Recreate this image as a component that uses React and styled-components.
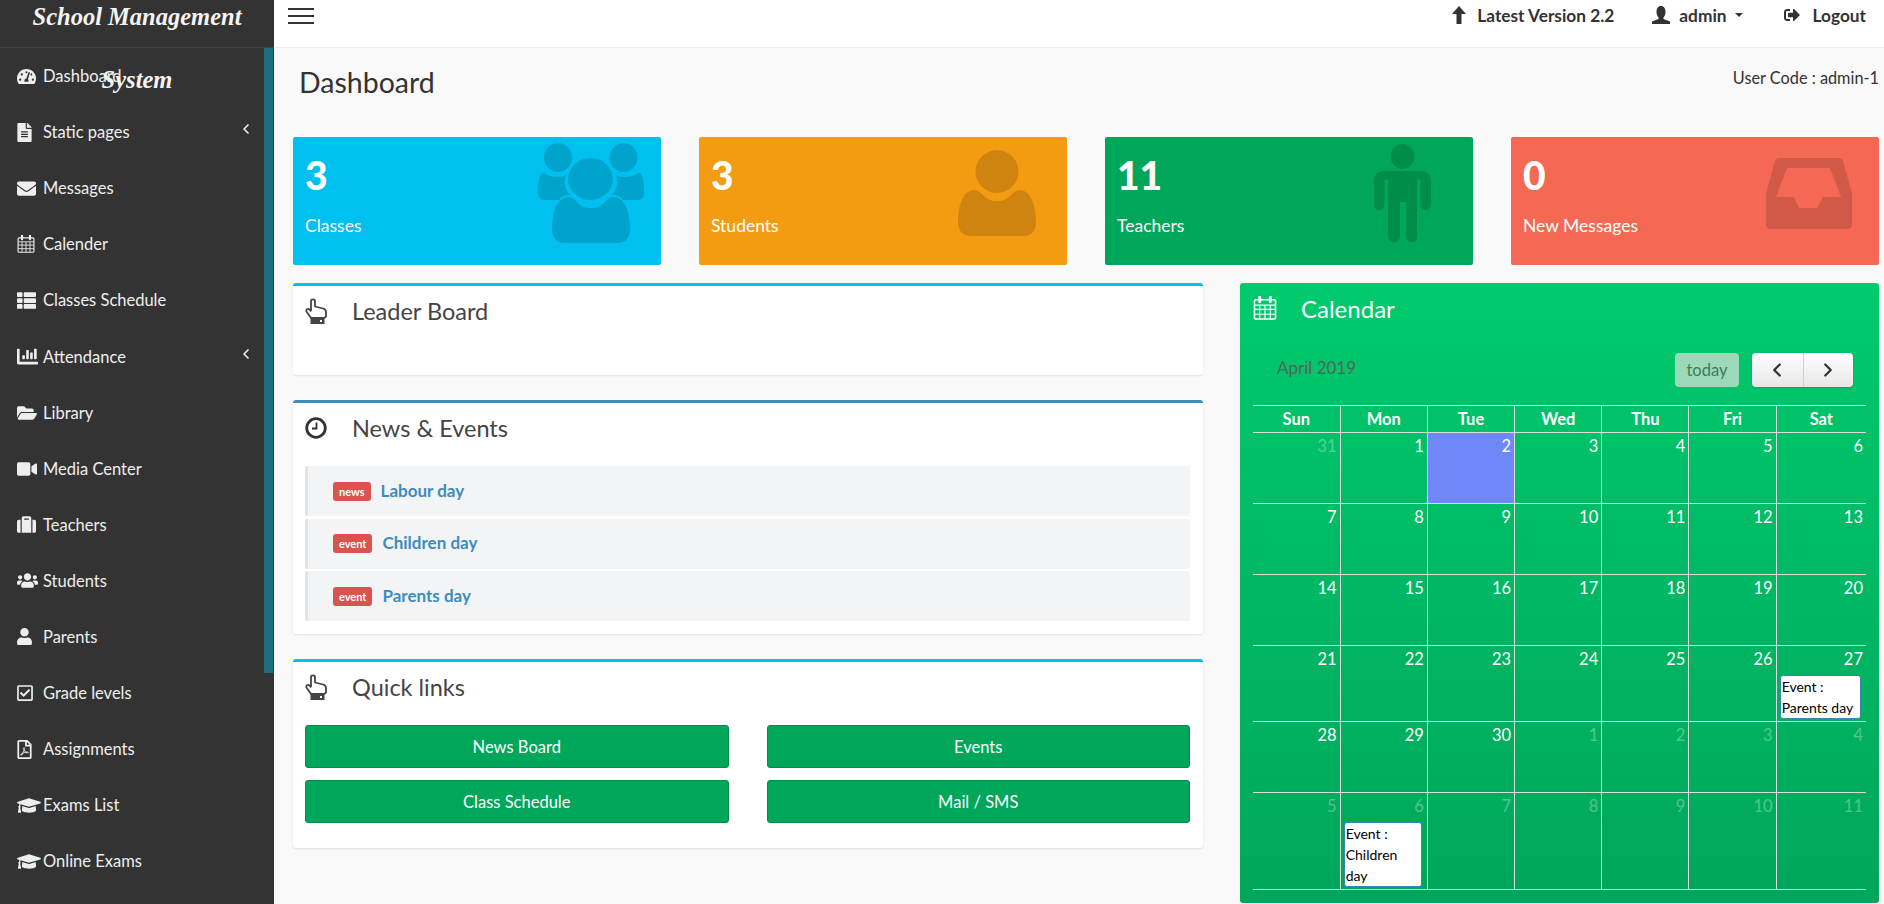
import React from "react"
import styled, { createGlobalStyle } from "styled-components"
import {
  FaTachometerAlt, FaFileAlt, FaEnvelope, FaThList, FaChartBar, FaFolderOpen, FaVideo,
  FaSuitcase, FaUsers, FaUser, FaRegCheckSquare, FaRegFilePdf, FaGraduationCap, FaSignOutAlt,
} from "react-icons/fa"
import { ChevronLeft, ChevronRight } from "lucide-react"

const GlobalStyle = createGlobalStyle`
  html, body { margin: 0; padding: 0; height: 100%; overflow: hidden; }
  body { font-family: "Lato", "Noto Sans", sans-serif; font-size: 16px; color: #333; }
  * { box-sizing: border-box; }
`

const Shell = styled.div`
  display: flex;
  height: 100vh;
  overflow: hidden;
`

const Sidebar = styled.aside`
  position: relative;
  flex: 0 0 274px;
  background: #333;
  color: #eee;
`

const Logo = styled.div`
  display: flow-root;
  position: relative;
  z-index: 2;
  height: 48px;
  border-bottom: 1px solid #444;
  text-align: center;
  font-family: "Liberation Serif", serif;
  font-style: italic;
  font-weight: 700;
  font-size: 24.5px;
  line-height: 63px;
  color: #f4f4f4;
  span { display: block; }
  span:first-child { margin-top: -15px; }
`

const ScrollThumb = styled.div`
  position: absolute;
  top: 48px;
  right: 1px;
  width: 9px;
  height: 625px;
  background: #1f6e80;
`

const Menu = styled.nav`
  display: flex;
  flex-direction: column;
`

const MenuItem = styled.div`
  flex: 0 0 56.1px;
  display: flex;
  align-items: center;
  padding: 0 20px 0 17px;
  font-size: 16.5px;
  color: #eee;
`

const MenuIcon = styled.span`
  flex: 0 0 26px;
  display: flex;
  align-items: center;
  svg { width: ${p => p.$w}px; height: ${p => p.$h}px; flex: none; display: block; }
`

const MenuCaret = styled.span`
  margin-left: auto;
  margin-top: -6px;
  display: flex;
`

const Right = styled.div`
  flex: 1;
  min-width: 0;
  display: flex;
  flex-direction: column;
  background: #f9f9f9;
`

const TopBar = styled.header`
  flex: 0 0 48px;
  display: flex;
  align-items: flex-start;
  padding: 7px 18px 0 14px;
  background: #fff;
  border-bottom: 1px solid #eee;
  font-weight: 700;
  font-size: 17.3px;
  color: #333;
`

const Burger = styled.div`
  width: 26px;
  margin-top: 1px;
  display: flex;
  flex-direction: column;
  gap: 5px;
  i { display: block; height: 2px; background: #333; }
`

const TopLinks = styled.div`
  margin-left: auto;
  display: flex;
  align-items: center;
  height: 16px;
`

const TopLink = styled.span`
  display: flex;
  align-items: center;
  gap: ${p => p.$gap}px;
  margin-left: ${p => p.$ml}px;
  svg { display: block; }
`

const Caret = styled.i`
  width: 0;
  height: 0;
  margin-left: -1px;
  border-left: 4px solid transparent;
  border-right: 4px solid transparent;
  border-top: 4px solid #333;
`

const Content = styled.main`
  flex: 1;
  padding: 0 5px 0 19px;
`

const PageHead = styled.div`
  height: 89px;
  display: flex;
  justify-content: space-between;
  align-items: flex-start;
`

const PageTitle = styled.h1`
  margin: 15px 0 0 6px;
  font-size: 28.5px;
  line-height: 38px;
  font-weight: 400;
  color: #333;
`

const UserCode = styled.div`
  margin-top: 19px;
  font-size: 16.3px;
  line-height: 22px;
`

const Stats = styled.section`
  display: grid;
  grid-template-columns: repeat(4, 1fr);
  gap: 38px;
  margin-bottom: 18px;
`

const StatCard = styled.div`
  height: 128px;
  display: flex;
  justify-content: space-between;
  align-items: center;
  padding-left: 12px;
  background: ${p => p.$bg};
  border-radius: 2px;
  color: #fff;
`

const StatText = styled.div`
  align-self: flex-start;
`

const StatValue = styled.div`
  margin-top: 13px;
  font-size: 39px;
  line-height: 50px;
  font-weight: 900;
`

const StatLabel = styled.div`
  margin-top: 16px;
  font-size: 17.5px;
  line-height: 20px;
`

const StatIcon = styled.svg`
  display: block;
  width: ${p => p.$w}px;
  height: ${p => p.$h}px;
  margin: 0 ${p => p.$mr}px 16px 0;
  fill: rgba(0, 0, 0, 0.15);
`

const Columns = styled.section`
  display: grid;
  grid-template-columns: 910px 639px;
  gap: 37px;
  align-items: start;
`

const LeftCol = styled.div`
  display: flex;
  flex-direction: column;
  gap: 25px;
`

const Panel = styled.div`
  background: #fff;
  border-top: 3px solid ${p => p.$accent};
  border-radius: 3px;
  box-shadow: 0 1px 2px rgba(0, 0, 0, 0.1);
`

const PanelHead = styled.div`
  height: 50px;
  padding-left: 12px;
  display: flex;
  align-items: center;
  font-size: 23.5px;
  color: #444;
`

const PanelIcon = styled.span`
  flex: 0 0 47px;
  display: flex;
  svg { display: block; }
`

const PanelBody = styled.div`
  padding: 13px 13px ${p => p.$pb}px 12px;
`

const NewsList = styled.div`
  display: flex;
  flex-direction: column;
  gap: 2.5px;
`

const NewsItem = styled.div`
  height: 50px;
  display: flex;
  align-items: center;
  padding: 0 0 2px 25px;
  gap: 10px;
  background: #f3f4f5;
  border-left: 3px solid #e1e3e5;
  border-radius: 2px;
  color: #3c8dbc;
  font-weight: 700;
  font-size: 17px;
`

const Tag = styled.span`
  margin-top: 2px;
  padding: 3px 6px;
  background: #d9534f;
  border-radius: 3px;
  color: #fff;
  font-size: 11px;
  line-height: 13px;
  font-weight: 700;
`

const LinkGrid = styled.div`
  display: grid;
  grid-template-columns: 1fr 1fr;
  gap: 12px 38px;
`

const LinkButton = styled.div`
  height: 43px;
  display: flex;
  align-items: center;
  justify-content: center;
  background: #00a65a;
  border: 1px solid #008d4c;
  border-radius: 3px;
  color: #fff;
  font-size: 16.5px;
`

const CalendarBox = styled.div`
  height: 620px;
  padding: 0 13px;
  background: linear-gradient(to top, #00a65a, #00ca6d);
  border-radius: 3px;
  color: #fff;
`

const CalendarHead = styled.div`
  height: 50px;
  display: flex;
  align-items: center;
  font-size: 24px;
  svg { display: block; }
  span { flex: 0 0 48px; }
`

const CalendarBar = styled.div`
  height: 72px;
  padding: 20px 13px 0 24px;
  display: flex;
  align-items: flex-start;
`

const MonthName = styled.div`
  font-size: 17px;
  line-height: 24px;
  margin-top: 3px;
  color: #50655c;
`

const TodayButton = styled.div`
  margin-left: auto;
  width: 64px;
  height: 34px;
  display: flex;
  align-items: center;
  justify-content: center;
  background: #9bd9b9;
  border-radius: 4px;
  color: #3f7a5e;
  font-size: 16.5px;
`

const NavGroup = styled.div`
  margin-left: 13px;
  width: 101px;
  height: 34px;
  display: grid;
  grid-template-columns: 1fr 1fr;
  background: linear-gradient(to bottom, #fff, #e6e6e6);
  border-radius: 4px;
  box-shadow: 0 1px 2px rgba(0, 0, 0, 0.15);
  color: #333;
`

const NavCell = styled.div`
  display: flex;
  align-items: center;
  justify-content: center;
  border-left: ${p => (p.$divided ? "1px solid #d0d0d0" : "none")};
`

const CalTable = styled.table`
  width: 100%;
  table-layout: fixed;
  border-collapse: collapse;
  border-top: 1px solid #ddd;
  border-bottom: 1px solid #ddd;
`

const CalHeadCell = styled.th`
  height: 27px;
  padding: 0;
  border-left: 1px solid #ddd;
  border-bottom: 1px solid #ddd;
  font-size: 16.5px;
  font-weight: 700;
  &:first-child { border-left: none; }
  &:not(:last-child) { width: 87.2px; }
`

const DayCell = styled.td`
  height: 71px;
  padding: 0 0 2px;
  vertical-align: top;
  border-left: 1px solid #ddd;
  border-top: 1px solid #ddd;
  background: ${p => (p.$today ? "#6f87f7" : "transparent")};
  &:first-child { border-left: none; }
`

const DayNumber = styled.div`
  height: 29px;
  padding: 1px 3px 0 0;
  text-align: right;
  font-size: 16.5px;
  line-height: 24px;
  opacity: ${p => (p.$muted ? 0.3 : 1)};
`

const EventBox = styled.div`
  margin: 0 5px 0 3px;
  padding: 0 1px;
  background: #fff;
  border: 1px solid #3a87ad;
  border-radius: 3px;
  color: #000;
  font-size: 14px;
  line-height: 21px;
`

const CalendarGlyph = ({ size, color }) => (
  <svg width={size} height={size} viewBox="0 0 24 25" fill="none" stroke={color} strokeWidth="1.6">
    <rect x="1" y="4" width="22" height="20" rx="1.5" />
    <path d="M1 9.5H23M1 14H23M1 19H23M6.5 9.5V24M12 9.5V24M17.5 9.5V24" strokeWidth="1.2" />
    <path d="M6.5 1V6M17.5 1V6" strokeWidth="3" strokeLinecap="round" />
  </svg>
)

const HandIcon = () => (
  <svg width="22" height="26" viewBox="0 0 22 26" fill="none" stroke="#444" strokeWidth="1.8" strokeLinejoin="round">
    <path d="M6 13V3.2C6 .8 10 .8 10 3.2V8.5L18 10.5C20 11 21 12 21 14V18.5L19 20H6L1.5 13.5C.5 11.5 3 10 4.5 11.5L6 13.5" />
    <rect x="5.5" y="20" width="14" height="6" fill="#444" stroke="none" />
    <rect x="15" y="22" width="2" height="2" fill="#fff" stroke="none" />
  </svg>
)

const ClockIcon = () => (
  <svg width="22" height="22" viewBox="0 0 22 22" fill="none" stroke="#333">
    <circle cx="11" cy="11" r="9.3" strokeWidth="2.8" />
    <path d="M11.5 5.5V11.5H7" strokeWidth="1.8" />
  </svg>
)

const ArrowUpIcon = () => (
  <svg width="14" height="18" viewBox="0 0 14 18" fill="#333">
    <path d="M7 0L14 8H9.5V18H4.5V8H0Z" />
  </svg>
)

const BustIcon = () => (
  <svg width="18" height="18" viewBox="0 0 18 18" fill="#333">
    <path d="M9 0C12 0 13.5 2.5 13.5 6C13.5 8.5 12.5 10.5 11.5 11.5V13L18 15.5V18H0V15.5L6.5 13V11.5C5.5 10.5 4.5 8.5 4.5 6C4.5 2.5 6 0 9 0Z" />
  </svg>
)

const menu = [
  { label: "Dashboard", icon: <FaTachometerAlt />, w: 19, h: 17 },
  { label: "Static pages", icon: <FaFileAlt />, w: 15, h: 19, sub: true },
  { label: "Messages", icon: <FaEnvelope />, w: 19, h: 19 },
  { label: "Calender", icon: <CalendarGlyph size={18} color="#eee" />, w: 18, h: 18 },
  { label: "Classes Schedule", icon: <FaThList />, w: 19, h: 19 },
  { label: "Attendance", icon: <FaChartBar />, w: 21, h: 21, sub: true },
  { label: "Library", icon: <FaFolderOpen />, w: 20, h: 18 },
  { label: "Media Center", icon: <FaVideo />, w: 20, h: 18 },
  { label: "Teachers", icon: <FaSuitcase />, w: 19, h: 19 },
  { label: "Students", icon: <FaUsers />, w: 21, h: 17 },
  { label: "Parents", icon: <FaUser />, w: 15, h: 17 },
  { label: "Grade levels", icon: <FaRegCheckSquare />, w: 16, h: 18 },
  { label: "Assignments", icon: <FaRegFilePdf />, w: 15, h: 19 },
  { label: "Exams List", icon: <FaGraduationCap />, w: 24, h: 19 },
  { label: "Online Exams", icon: <FaGraduationCap />, w: 24, h: 19 },
]

const GroupIcon = () => (
  <StatIcon $w={106} $h={100} $mr={17} viewBox="0 0 106 100">
    <ellipse cx="20" cy="14.5" rx="14" ry="14.5" />
    <ellipse cx="85.5" cy="14.5" rx="14" ry="14.5" />
    <ellipse cx="52.5" cy="36" rx="22.5" ry="21" />
    <path d="M30 54C34 54 36 56 39 59C43 63 47 65 53 65C59 65 63 63 67 59C70 56 72 54 76 54C86 54 92 68 92 86C92 94 88 100 80 100H26C18 100 14 94 14 86C14 68 20 54 30 54Z" />
    <path d="M5 30C8 30 10 34 20 34C24 34 26 33 28 32C26 38 26 44 32 52C26 52 23 54 21 57H7C2 57 0 54 0 49C0 40 1 30 5 30Z" />
    <path transform="translate(106 0) scale(-1 1)" d="M5 30C8 30 10 34 20 34C24 34 26 33 28 32C26 38 26 44 32 52C26 52 23 54 21 57H7C2 57 0 54 0 49C0 40 1 30 5 30Z" />
  </StatIcon>
)

const PersonIcon = () => (
  <StatIcon $w={78} $h={86} $mr={31} viewBox="0 0 78 86">
    <ellipse cx="39" cy="21.5" rx="21.5" ry="21.5" />
    <path d="M16 40C20 40 22 42 25 45C29 49 33 51 39 51C45 51 49 49 53 45C56 42 58 40 62 40C72 40 78 54 78 72C78 80 74 86 66 86H12C4 86 0 80 0 72C0 54 6 40 16 40Z" />
  </StatIcon>
)

const TeacherIcon = () => (
  <StatIcon $w={57} $h={98} $mr={42} viewBox="0 0 57 98">
    <ellipse cx="28.5" cy="12.5" rx="12" ry="12.5" />
    <path d="M10 27H47C53 27 57 31 57 37V60C57 64 54 66 52 66C49 66 46.5 64 46.5 60V35.5H43V92C43 96 41 98 38 98C35 98 32 96 32 92V58H26V92C26 96 23 98 20 98C17 98 14 96 14 92V35.5H10.5V60C10.5 64 8 66 5 66C2 66 0 64 0 60V37C0 31 4 27 10 27Z" />
  </StatIcon>
)

const InboxIcon = () => (
  <StatIcon $w={86} $h={71} $mr={27} viewBox="0 0 86 71">
    <path fillRule="evenodd" d="M13 0H73C75 0 76 1 77 3L85 32C86 34 86 36 86 38V66C86 69 84 71 81 71H5C2 71 0 69 0 66V38C0 36 0 34 1 32L9 3C10 1 11 0 13 0ZM21 10L10 39H28L33 50H51L57 39H75L64 10Z" />
  </StatIcon>
)

const stats = [
  { value: 3, label: "Classes", bg: "#00c0ef", icon: <GroupIcon /> },
  { value: 3, label: "Students", bg: "#f39c12", icon: <PersonIcon /> },
  { value: 11, label: "Teachers", bg: "#00a65a", icon: <TeacherIcon /> },
  { value: 0, label: "New Messages", bg: "#f56954", icon: <InboxIcon /> },
]

const news = [
  { tag: "news", title: "Labour day" },
  { tag: "event", title: "Children day" },
  { tag: "event", title: "Parents day" },
]

const links = ["News Board", "Events", "Class Schedule", "Mail / SMS"]
const weekDays = ["Sun", "Mon", "Tue", "Wed", "Thu", "Fri", "Sat"]

// days of the grid, April 2019 plus the spill from the months around it
const days = [31, ...Array.from({ length: 30 }, (_, i) => i + 1), ...Array.from({ length: 11 }, (_, i) => i + 1)].map(
  (day, i) => ({ day, muted: i === 0 || i > 30, today: i === 2 })
)
const weeks = Array.from({ length: 6 }, (_, w) => days.slice(w * 7, w * 7 + 7))
const events = { "3-6": "Parents day", "5-1": "Children day" }

const App = () => {
  return (
    <Shell>
      <GlobalStyle />
      <Sidebar>
        <Logo>
          <span>School Management</span>
          <span>System</span>
        </Logo>
        <ScrollThumb />
        <Menu>
          {menu.map(item => (
            <MenuItem key={item.label}>
              <MenuIcon $w={item.w} $h={item.h}>{item.icon}</MenuIcon>
              {item.label}
              {item.sub && (
                <MenuCaret>
                  <ChevronLeft size={16} strokeWidth={2.5} />
                </MenuCaret>
              )}
            </MenuItem>
          ))}
        </Menu>
      </Sidebar>

      <Right>
        <TopBar>
          <Burger>
            <i />
            <i />
            <i />
          </Burger>
          <TopLinks>
            <TopLink $gap={11}>
              <ArrowUpIcon />
              Latest Version 2.2
            </TopLink>
            <TopLink $gap={9} $ml={38}>
              <BustIcon />
              admin
              <Caret />
            </TopLink>
            <TopLink $gap={13} $ml={41}>
              <FaSignOutAlt size={16} />
              Logout
            </TopLink>
          </TopLinks>
        </TopBar>

        <Content>
          <PageHead>
            <PageTitle>Dashboard</PageTitle>
            <UserCode>User Code : admin-1</UserCode>
          </PageHead>

          <Stats>
            {stats.map(stat => (
              <StatCard key={stat.label} $bg={stat.bg}>
                <StatText>
                  <StatValue>{stat.value}</StatValue>
                  <StatLabel>{stat.label}</StatLabel>
                </StatText>
                {stat.icon}
              </StatCard>
            ))}
          </Stats>

          <Columns>
            <LeftCol>
              <Panel $accent="#00c0ef">
                <PanelHead>
                  <PanelIcon>
                    <HandIcon />
                  </PanelIcon>
                  Leader Board
                </PanelHead>
                <PanelBody $pb={26} />
              </Panel>

              <Panel $accent="#3c8dbc">
                <PanelHead>
                  <PanelIcon>
                    <ClockIcon />
                  </PanelIcon>
                  News &amp; Events
                </PanelHead>
                <PanelBody $pb={13}>
                  <NewsList>
                    {news.map(item => (
                      <NewsItem key={item.title}>
                        <Tag>{item.tag}</Tag>
                        {item.title}
                      </NewsItem>
                    ))}
                  </NewsList>
                </PanelBody>
              </Panel>

              <Panel $accent="#00c0ef">
                <PanelHead>
                  <PanelIcon>
                    <HandIcon />
                  </PanelIcon>
                  Quick links
                </PanelHead>
                <PanelBody $pb={25}>
                  <LinkGrid>
                    {links.map(link => (
                      <LinkButton key={link}>{link}</LinkButton>
                    ))}
                  </LinkGrid>
                </PanelBody>
              </Panel>
            </LeftCol>

            <CalendarBox>
              <CalendarHead>
                <span>
                  <CalendarGlyph size={24} color="#fff" />
                </span>
                Calendar
              </CalendarHead>
              <CalendarBar>
                <MonthName>April 2019</MonthName>
                <TodayButton>today</TodayButton>
                <NavGroup>
                  <NavCell>
                    <ChevronLeft size={22} strokeWidth={2.5} />
                  </NavCell>
                  <NavCell $divided>
                    <ChevronRight size={22} strokeWidth={2.5} />
                  </NavCell>
                </NavGroup>
              </CalendarBar>
              <CalTable>
                <thead>
                  <tr>
                    {weekDays.map(d => (
                      <CalHeadCell key={d}>{d}</CalHeadCell>
                    ))}
                  </tr>
                </thead>
                <tbody>
                  {weeks.map((week, w) => (
                    <tr key={w}>
                      {week.map((cell, d) => (
                        <DayCell key={d} $today={cell.today}>
                          <DayNumber $muted={cell.muted}>{cell.day}</DayNumber>
                          {events[`${w}-${d}`] && <EventBox>Event : {events[`${w}-${d}`]}</EventBox>}
                        </DayCell>
                      ))}
                    </tr>
                  ))}
                </tbody>
              </CalTable>
            </CalendarBox>
          </Columns>
        </Content>
      </Right>
    </Shell>
  )
}

export default App
